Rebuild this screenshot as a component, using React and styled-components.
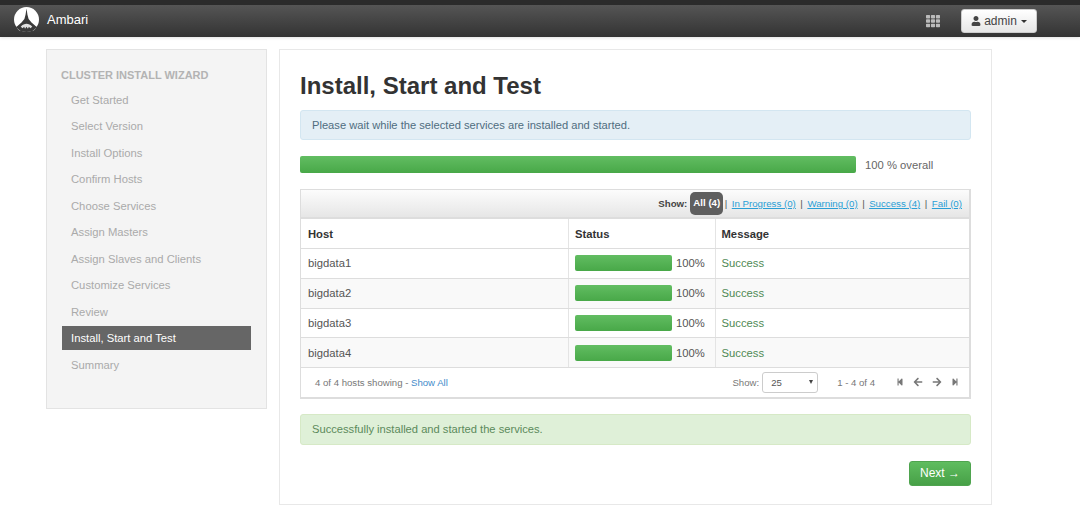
import React from 'react';
import styled, { createGlobalStyle } from 'styled-components';
import { FaUser, FaTh, FaStepBackward, FaStepForward, FaArrowLeft, FaArrowRight } from 'react-icons/fa';

const steps = [
  'Get Started',
  'Select Version',
  'Install Options',
  'Confirm Hosts',
  'Choose Services',
  'Assign Masters',
  'Assign Slaves and Clients',
  'Customize Services',
  'Review',
  'Install, Start and Test',
  'Summary',
];
const hosts = ['bigdata1', 'bigdata2', 'bigdata3', 'bigdata4'];
const filters = ['In Progress (0)', 'Warning (0)', 'Success (4)', 'Fail (0)'];

export default function App() {
  return (
    <>
      <Global />
      <Navbar>
        <Brand>
          <Logo viewBox="0 0 26 26">
            <circle cx="13" cy="13" r="13" fill="#fff" />
            <path d="M13 1.500l1 6.500 1.200 4.500 3 3.500 6.300 5.500C21 25 17 26 13 26S5 25 1.500 21.500l6.300-5.500 3-3.500 1.200-4.500z" fill="#3a3a3a" />
            <path d="M7 20.500c2-2 4-3 6-3s4 1 6 3l-2 1.500-1.500-1.500-1 2-1.500-2-1.500 2-1-2L9 22z" fill="#fff" opacity=".85" />
            <path d="M2.500 21c1 2 3 3.500 4.500 4.200L4 22.500zM23.500 21c-1 2-3 3.500-4.500 4.200l3-2.700z" fill="#ddd" />
          </Logo>
          Ambari
        </Brand>
        <NavRight>
          <Grid />
          <UserButton>
            <FaUser size={10} />
            admin
            <Caret />
          </UserButton>
        </NavRight>
      </Navbar>
      <Page>
        <Sidebar>
          <WizardTitle>CLUSTER INSTALL WIZARD</WizardTitle>
          {steps.map(s => (
            <Step key={s} $active={s === 'Install, Start and Test'}>
              {s}
            </Step>
          ))}
        </Sidebar>
        <Main>
          <Title>Install, Start and Test</Title>
          <InfoAlert>Please wait while the selected services are installed and started.</InfoAlert>
          <Overall>
            <Bar $height={17} />
            <span>100 % overall</span>
          </Overall>
          <TableBox>
            <Toolbar>
              <strong>Show:</strong>
              <AllPill>All (4)</AllPill>
              {filters.map((f, i) => (
                <React.Fragment key={f}>
                  <Sep $first={i === 0}>|</Sep>
                  <FilterLink>{f}</FilterLink>
                </React.Fragment>
              ))}
            </Toolbar>
            <Row $head>
              <Cell>Host</Cell>
              <Cell>Status</Cell>
              <Cell>Message</Cell>
            </Row>
            {hosts.map((h, i) => (
              <Row key={h} $odd={i % 2 === 1}>
                <Cell>{h}</Cell>
                <Cell>
                  <Bar $height={16} $width="97px" />
                  <span>100%</span>
                </Cell>
                <Cell><SuccessText>Success</SuccessText></Cell>
              </Row>
            ))}
            <Footer>
              <span>4 of 4 hosts showing - <ShowAll>Show All</ShowAll></span>
              <Pager>
                <span>Show:</span>
                <Select><span>25</span><SelectArrow /></Select>
                <Range>1 - 4 of 4</Range>
                <PagerIcons>
                  <FaStepBackward size={8} />
                  <FaArrowLeft size={10} />
                  <FaArrowRight size={10} />
                  <FaStepForward size={8} />
                </PagerIcons>
              </Pager>
            </Footer>
          </TableBox>
          <SuccessAlert>Successfully installed and started the services.</SuccessAlert>
          <Actions>
            <NextButton>Next &rarr;</NextButton>
          </Actions>
        </Main>
      </Page>
    </>
  );
}

const Global = createGlobalStyle`
  html, body { margin: 0; padding: 0; background: #fff; }
  body {
    font-family: "Liberation Sans", Arial, sans-serif;
    font-size: 11.25px;
    color: #666;
    overflow: hidden;
  }
`;

const Navbar = styled.header`
  height: 37px;
  box-sizing: border-box;
  border-top: 5px solid #2b2b2b;
  background: linear-gradient(to bottom, #555 0%, #333 100%);
  box-shadow: 0 1px 3px rgba(0, 0, 0, 0.12);
  display: flex;
  align-items: center;
  justify-content: space-between;
  padding: 0 43px 4px 14px;
`;

const Brand = styled.div`
  display: flex;
  align-items: center;
  gap: 8px;
  color: #fff;
  font-size: 13px;
`;

const Logo = styled.svg`
  width: 25px;
  height: 25px;
`;

const NavRight = styled.div`
  display: flex;
  align-items: center;
  gap: 20px;
  margin-bottom: -4px;
`;

const Grid = styled(FaTh)`
  width: 16px;
  height: 14px;
  color: #bbb;
`;

const UserButton = styled.button`
  width: 76px;
  height: 24px;
  display: flex;
  align-items: center;
  justify-content: center;
  gap: 3px;
  padding: 0;
  background: linear-gradient(to bottom, #fff, #e6e6e6);
  border: 1px solid #ccc;
  border-radius: 3px;
  color: #444;
  font: 12px "Liberation Sans", Arial, sans-serif;
`;

const Caret = styled.i`
  width: 0;
  height: 0;
  margin-left: 1px;
  border-left: 3.5px solid transparent;
  border-right: 3.5px solid transparent;
  border-top: 3.5px solid #333;
`;

const Page = styled.div`
  display: flex;
  align-items: flex-start;
  gap: 12px;
  padding: 12px 88px 0 46px;
`;

const Sidebar = styled.nav`
  width: 221px;
  height: 360px;
  box-sizing: border-box;
  padding: 11.5px 15px 0;
  background: #f4f4f4;
  border: 1px solid #e3e3e3;
`;

const WizardTitle = styled.div`
  height: 26px;
  line-height: 26px;
  margin-left: -1px;
  font-size: 11px;
  font-weight: bold;
  color: #b3b3b3;
`;

const Step = styled.div`
  height: 24px;
  line-height: 24px;
  margin-bottom: 2.5px;
  padding-left: 9px;
  color: ${p => (p.$active ? '#fff' : '#aaa')};
  background: ${p => (p.$active ? '#666' : 'transparent')};
`;

const Main = styled.main`
  width: 713px;
  height: 456px;
  box-sizing: border-box;
  padding: 0 20px;
  border: 1px solid #e8e8e8;
`;

const Title = styled.h1`
  margin: 22px 0 10px;
  height: 28px;
  line-height: 28px;
  font-size: 24px;
  font-weight: bold;
  color: #333;
`;

const InfoAlert = styled.div`
  height: 30px;
  line-height: 28px;
  box-sizing: border-box;
  padding-left: 11px;
  background: #e4eff6;
  border: 1px solid #d3e6f1;
  border-radius: 3px;
  color: #4f6d80;
  font-size: 11.17px;
`;

const Overall = styled.div`
  display: flex;
  align-items: center;
  gap: 9px;
  height: 17px;
  margin: 16px 0;
  span { width: 106px; color: #666; }
`;

const Bar = styled.div`
  flex: ${p => (p.$width ? 'none' : 1)};
  width: ${p => p.$width || 'auto'};
  height: ${p => p.$height}px;
  background: linear-gradient(to bottom, #62bd62, #48a848);
  border-radius: 2px;
`;

const TableBox = styled.section`
  border: 1px solid #ddd;
  border-bottom-width: 2px;
  border-right-width: 2px;
`;

const Toolbar = styled.div`
  height: 29px;
  box-sizing: border-box;
  display: flex;
  align-items: center;
  justify-content: flex-end;
  padding-right: 7px;
  background: linear-gradient(to bottom, #fcfcfc, #e6e6e6);
  border-bottom: 2px solid #ddd;
  font-size: 9.7px;
  color: #444;
`;

const AllPill = styled.span`
  margin-left: 3px;
  padding: 0 3px;
  height: 23px;
  line-height: 22px;
  background: #5f5f5f;
  color: #fff;
  border-radius: 5px;
  font-weight: bold;
`;

const Sep = styled.span`
  margin: 0 4.5px 0 ${p => (p.$first ? 1.5 : 4.5)}px;
  color: #555;
`;

const FilterLink = styled.a`
  color: #2a9fd6;
  text-decoration: underline;
`;

const Row = styled.div`
  display: grid;
  grid-template-columns: 267px 146.5px 1fr;
  height: ${p => (p.$head ? 30 : 29.75)}px;
  background: ${p => (p.$odd ? '#f9f9f9' : '#fff')};
  font-weight: ${p => (p.$head ? 'bold' : 'normal')};
  color: ${p => (p.$head ? '#333' : '#555')};
  border-bottom: 1px solid #ddd;
  box-sizing: border-box;
`;

const Cell = styled.div`
  display: flex;
  align-items: center;
  gap: 4px;
  padding-left: 6px;
  border-left: 1px solid #e4e4e4;
  &:first-child { border-left: 0; padding-left: 7px; }
`;

const SuccessText = styled.span`
  color: #4f8a55;
`;

const Footer = styled.div`
  height: 28.5px;
  display: flex;
  align-items: center;
  justify-content: space-between;
  padding: 0 10px 0 14px;
  font-size: 9.6px;
  color: #777;
`;

const ShowAll = styled.a`
  color: #428bca;
`;

const Pager = styled.div`
  display: flex;
  align-items: center;
  gap: 3px;
`;

const Select = styled.div`
  width: 56px;
  height: 21px;
  box-sizing: border-box;
  display: flex;
  align-items: center;
  justify-content: space-between;
  padding: 0 4px 0 8px;
  border: 1px solid #ccc;
  border-radius: 3px;
  color: #555;
`;

const SelectArrow = styled.i`
  border-left: 2.5px solid transparent;
  border-right: 2.5px solid transparent;
  border-top: 4px solid #444;
`;

const Range = styled.span`
  margin-left: 16px;
`;

const PagerIcons = styled.div`
  display: flex;
  align-items: center;
  gap: 9px;
  margin-left: 18px;
  color: #777;
`;

const SuccessAlert = styled.div`
  height: 30.5px;
  line-height: 28px;
  margin-top: 15.5px;
  box-sizing: border-box;
  padding-left: 11px;
  background: #dff0d8;
  border: 1px solid #d6e9c6;
  border-radius: 3px;
  color: #5b8a5b;
  font-size: 11.17px;
`;

const Actions = styled.div`
  display: flex;
  justify-content: flex-end;
  margin-top: 16px;
`;

const NextButton = styled.button`
  width: 62px;
  height: 25px;
  padding: 0;
  background: linear-gradient(to bottom, #5fbd5f, #47a047);
  border: 1px solid #4fa44f;
  border-radius: 3px;
  color: #fff;
  font: 12px "Liberation Sans", Arial, sans-serif;
`;
